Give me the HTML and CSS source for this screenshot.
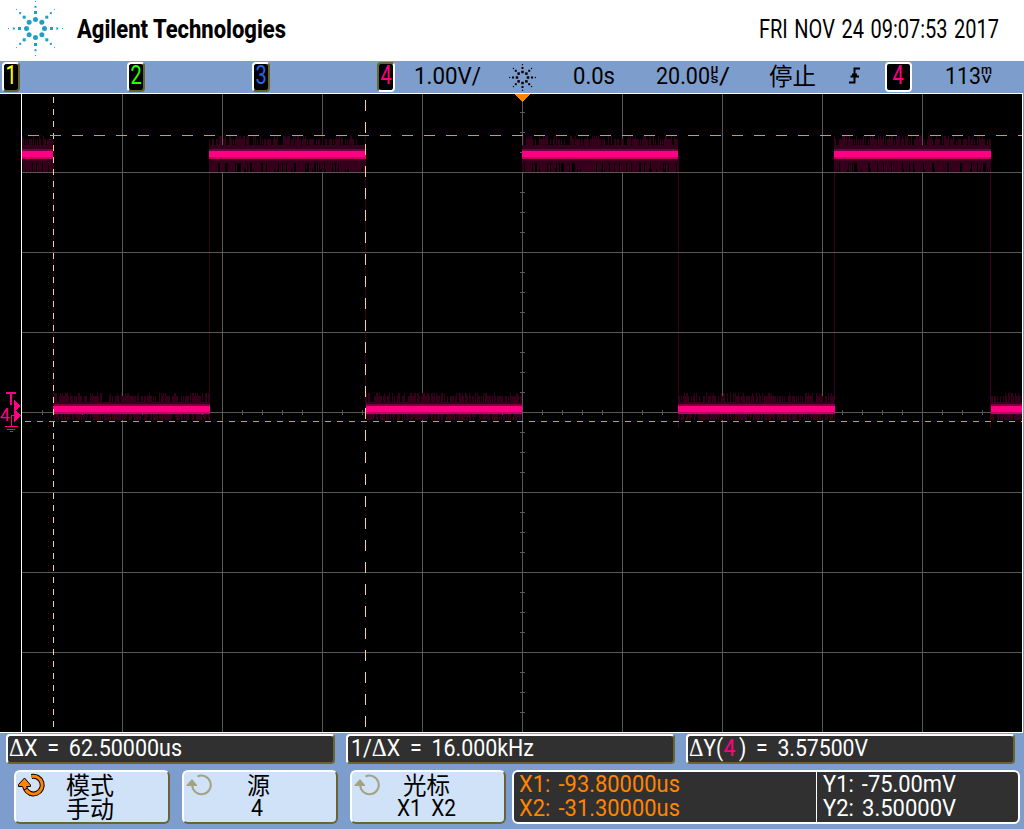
FILE: index.html
```
<!DOCTYPE html>
<html lang="zh">
<head>
  <meta charset="UTF-8">
  <title>Agilent Technologies</title>
  <link rel="stylesheet" href="styles.css">
</head>
<body>
  <div class="scope">
    <header class="header">
      <svg class="logo" id="logo" width="70" height="61"></svg>
      <svg class="brand" width="212" height="61"><text y="38" textLength="209" lengthAdjust="spacingAndGlyphs">Agilent Technologies</text></svg>
      <svg class="date" width="242" height="61"><text y="38" textLength="240" lengthAdjust="spacingAndGlyphs">FRI NOV 24 09:07:53 2017</text></svg>
    </header>

    <div class="status">
      <span class="badge ch1"><b>1</b></span>
      <span class="badge ch2"><b>2</b></span>
      <span class="badge ch3"><b>3</b></span>
      <span class="badge ch4 on"><b>4</b></span>
      <svg class="volts" width="68" height="32"><text y="23" textLength="67" lengthAdjust="spacingAndGlyphs">1.00V/</text></svg>
      <svg class="sun" id="sun" width="28" height="32"></svg>
      <svg class="delay" width="43" height="32"><text y="23" textLength="42" lengthAdjust="spacingAndGlyphs">0.0s</text></svg>
      <svg class="timebase" width="76" height="32">
        <text y="23" textLength="54" lengthAdjust="spacingAndGlyphs">20.00</text>
        <text class="unit" x="54.5" y="12" textLength="8" lengthAdjust="spacingAndGlyphs">µ</text>
        <text class="unit" x="54.5" y="22" textLength="8" lengthAdjust="spacingAndGlyphs">s</text>
        <text x="63" y="23" textLength="11" lengthAdjust="spacingAndGlyphs">/</text>
      </svg>
      <svg class="stop" width="48" height="32"><text y="24" textLength="47" lengthAdjust="spacingAndGlyphs">停止</text></svg>
      <svg class="edge" width="12" height="32"><path d="M0 21.5H5.5V7.5H11M1.5 15.5H10M3 13.5H8"/></svg>
      <span class="badge trig ch4"><b>4</b></span>
      <svg class="level" width="50" height="32">
        <text y="23" textLength="36" lengthAdjust="spacingAndGlyphs">113</text>
        <text class="unit" x="36" y="13" textLength="11" lengthAdjust="spacingAndGlyphs">m</text>
        <text class="unit cap" x="37" y="22" textLength="9" lengthAdjust="spacingAndGlyphs">V</text>
      </svg>
    </div>

    <svg class="screen" width="1024" height="640" viewBox="0 93 1024 640" shape-rendering="crispEdges">
      <rect class="black" x="0" y="93" width="1023" height="640"/>
      <path class="noise" id="edges"/>
      <path class="grid" id="grid"/>
      <path class="noise" id="noise"/>
      <g id="trace"></g>
      <path class="curX" d="M53.5 97V732" stroke-dasharray="6 6"/>
      <path class="curX" d="M365.5 100V732" stroke-dasharray="11 11"/>
      <path class="curY" d="M28 135.5H1022" stroke-dasharray="11 11"/>
      <path class="curY" d="M25 421.5H1022" stroke-dasharray="6 6"/>
      <path class="frame" d="M0 93.5H1023M0 732.5H1023M21.5 93V732M1022.5 93V733"/>
      <path class="orange" d="M515 94H530L522.5 102Z"/>
      <g class="marker">
        <path d="M14 400L21 406L14 412ZM14 409L21 415L14 422Z"/>
        <path class="line" d="M6 393H16M11 393V405M14 415.5H11.5V426M5 426.5H18M7 429.5H15M10 431.5H13"/>
        <text x="0" y="421" textLength="10" lengthAdjust="spacingAndGlyphs">4</text>
      </g>
    </svg>

    <div class="measures">
      <div class="measure"><svg width="176" height="26"><text y="19" textLength="173" lengthAdjust="spacingAndGlyphs"><tspan class="delta">Δ</tspan>X = 62.50000us</text></svg></div>
      <div class="measure"><svg width="190" height="26"><text x="2" y="19" textLength="183" lengthAdjust="spacingAndGlyphs">1/<tspan class="delta">Δ</tspan>X = 16.000kHz</text></svg></div>
      <div class="measure"><svg width="190" height="26">
        <text y="19" textLength="34" lengthAdjust="spacingAndGlyphs"><tspan class="delta">Δ</tspan>Y(</text>
        <text class="pink" x="34.5" y="19" textLength="12" lengthAdjust="spacingAndGlyphs">4</text>
        <text x="50" y="19" textLength="129" lengthAdjust="spacingAndGlyphs">) = 3.57500V</text>
      </svg></div>
    </div>

    <div class="softkeys">
      <div class="key">
        <svg class="knob active" width="30" height="26"><path class="arc" d="M15.5 4.5A8.8 8.8 0 1 1 9.5 17"/><path class="arc in" d="M15.5 4.5A8.8 8.8 0 1 1 9.5 17"/><path class="tip" d="M8.5 6L2.5 12.5V14.5H6.5L8 18L11.5 16L10.5 14.5H14.5V13Z"/></svg>
        <svg class="caption" width="52" height="50"><text y="22" textLength="48" lengthAdjust="spacingAndGlyphs">模式</text><text y="46" textLength="48" lengthAdjust="spacingAndGlyphs">手动</text></svg>
      </div>
      <div class="key">
        <svg class="knob" width="30" height="26"><path class="arc" d="M13.5 4.5A9.3 9.3 0 1 1 8.2 13.5"/><path class="tip" d="M8 7L2.5 13V14H13V13Z"/></svg>
        <svg class="caption" width="24" height="50"><text y="22" textLength="23" lengthAdjust="spacingAndGlyphs">源</text><text x="4" y="44" textLength="12" lengthAdjust="spacingAndGlyphs">4</text></svg>
      </div>
      <div class="key">
        <svg class="knob" width="30" height="26"><path class="arc" d="M13.5 4.5A9.3 9.3 0 1 1 8.2 13.5"/><path class="tip" d="M8 7L2.5 13V14H13V13Z"/></svg>
        <svg class="caption wide" width="62" height="50"><text x="6" y="22" textLength="47" lengthAdjust="spacingAndGlyphs">光标</text><text y="44" textLength="59" lengthAdjust="spacingAndGlyphs">X1 X2</text></svg>
      </div>
      <div class="cursors">
        <svg class="xs" width="302" height="50"><text x="5" y="20" textLength="161" lengthAdjust="spacingAndGlyphs">X1: -93.80000us</text><text x="5" y="44" textLength="161" lengthAdjust="spacingAndGlyphs">X2: -31.30000us</text></svg>
        <svg class="ys" width="150" height="50"><text x="6" y="20" textLength="133" lengthAdjust="spacingAndGlyphs">Y1: -75.00mV</text><text x="6" y="44" textLength="133" lengthAdjust="spacingAndGlyphs">Y2: 3.50000V</text></svg>
      </div>
    </div>
  </div>
  <script src="scope.js"></script>
</body>
</html>
```
FILE: styles.css
```
body {
  margin: 0;
  background: #7d9dcd;
  font-family: Roboto, "Noto Sans CJK SC", sans-serif;
  font-size: 24px;
}

svg {
  display: block;
  flex: none;
  overflow: visible;
}

.scope {
  width: 1024px;
  height: 829px;
  overflow: hidden;
}

/* top */
.header {
  display: flex;
  height: 61px;
  background: #fff;
}

.logo {
  fill: #1f9fc4;
}

.brand {
  margin-left: 7px;
  font-size: 25px;
  font-weight: 800;
}

.date {
  margin-left: 470px;
  font-size: 25px;
  word-spacing: 2px;
}

.status {
  display: flex;
  height: 32px;
  font-size: 24px;
}

.badge {
  box-sizing: border-box;
  flex: none;
  width: 18px;
  height: 30px;
  margin-top: 1px;
  border: 2px solid;
  border-color: #fff #6b6330 #6b6330 #fff;
  border-radius: 4px;
  background: #000;
  font-size: 25px;
  line-height: 24px;
  display: flex;
  justify-content: center;
}

.badge b {
  font-weight: normal;
  transform: scaleX(.8);
}

.ch1 { color: #ff0; margin-left: 2px; }
.ch2 { color: #3f0; margin-left: 107px; }
.ch3 { color: #2266ee; margin-left: 107px; }
.ch4 { color: #ff0084; margin-left: 107px; }

.on {
  border-color: #6b6330 #fff #fff #6b6330;
}

.volts { margin-left: 19px; }
.sun { margin-left: 27px; }
.delay { margin-left: 36px; }
.timebase { margin-left: 40px; }
.stop { margin-left: 37px; }

.edge {
  margin-left: 32px;
  fill: none;
  stroke: #000;
  stroke-width: 2;
}

.trig {
  width: 27px;
  margin-left: 24px;
  border-color: #fff;
}

.level { margin-left: 33px; }

.unit {
  font-size: 12px;
  font-weight: 500;
}

.unit.cap { font-size: 10px; }

/* graticule */
.grid, .curX, .curY, .frame { fill: none; stroke-width: 1; }
.grid { stroke: #585858; }
.frame { stroke: #fff; }
.curX { stroke: #ffd08c; }
.curY { stroke: #ff9010; }
.noise { fill: none; stroke: #36001c; }
.orange { fill: #ff8400; }
.marker { fill: #ff0084; font-size: 18px; }
.marker .line { fill: none; stroke: #ff0084; stroke-width: 1.5; }
.core { fill: #ff0084; }
.mid { fill: #78003e; }
.low { fill: #c00064; }

/* bottom */
.measures {
  display: flex;
  gap: 11px;
  padding: 1px 0 0 6px;
}

.measure {
  box-sizing: border-box;
  width: 329px;
  height: 30px;
  padding: 1px 0 0 1px;
  border: 2px solid;
  border-color: #fff #6b6330 #6b6330 #fff;
  border-radius: 4px;
  background: #303030;
  fill: #fff;
  word-spacing: 5px;
}

.delta {
  font-family: "Liberation Serif", serif;
  font-size: 26px;
}

.pink {
  fill: #ff0084;
}

.softkeys {
  display: flex;
  padding: 6px 0 0 14px;
}

.key {
  box-sizing: border-box;
  display: flex;
  width: 156px;
  height: 54px;
  margin-right: 12px;
  border: 2px solid;
  border-color: #fff #6b6330 #6b6330 #fff;
  border-radius: 6px;
  background: #d0e2f8;
  word-spacing: 5px;
}

.caption { margin-left: 20px; }
.key:nth-child(2) .caption { margin-left: 33px; }
.caption.wide { margin-left: 15px; }

.knob { stroke: #a3a383; }
.knob .arc { fill: none; stroke-width: 2; }
.knob .tip { fill: #a3a383; stroke: none; }
.knob.active .arc { stroke: #000; stroke-width: 5; }
.knob.active .arc.in { stroke: #ff8400; stroke-width: 3; }
.knob.active .tip { fill: #ff8400; stroke: #000; }

.cursors {
  box-sizing: border-box;
  display: flex;
  width: 508px;
  height: 54px;
  margin-left: -6px;
  border: 2px solid #fff;
  border-radius: 6px;
  background: #303030;
  font-size: 24.5px;
  word-spacing: 3px;
}

.xs { fill: #ff8400; }
.ys { fill: #fff; border-left: 1px solid #fff; }
```
FILE: scope.js
```
const NS = "http://www.w3.org/2000/svg";

function add(parent, tag, attrs) {
  const el = document.createElementNS(NS, tag);
  for (const k in attrs) el.setAttribute(k, attrs[k]);
  parent.appendChild(el);
}

// eight rays of dots, rings = [distance, size]
function spark(id, cx, cy, rings) {
  const svg = document.getElementById(id);
  for (let i = 0; i < 8; i++) {
    const a = i * Math.PI / 4;
    rings.forEach(([r, size]) => {
      const x = cx + r * Math.cos(a), y = cy + r * Math.sin(a);
      if (size > 4) add(svg, "circle", { cx: x, cy: y, r: size / 2 });
      else add(svg, "rect", { x: x - size / 2, y: y - size / 2, width: size, height: size });
    });
  }
}
spark("logo", 35.5, 28.5, [[9, 5], [16, 3], [21.7, 2], [27, 1]]);
spark("sun", 13.5, 16.5, [[5.5, 2.5], [9.5, 2], [12.8, 1.2]]);

// grid and centre ticks
let d = "";
for (let x = 122; x < 1000; x += 100) d += `M${x + .5} 94V732`;
for (let y = 172; y < 700; y += 80) d += `M22 ${y + .5}H1022`;
for (let x = 42; x < 1020; x += 20) d += `M${x + .5} 410V415`;
for (let y = 112; y < 730; y += 20) d += `M520 ${y + .5}H525`;
document.getElementById("grid").setAttribute("d", d);

// square wave
let seed = 7;
function rnd() {
  seed = (seed * 16807) % 2147483647;
  return seed / 2147483647;
}
const high = [[22, 53], [209, 366], [522, 678], [834, 991]];
const low = [[53, 210], [366, 522], [678, 835], [991, 1022]];
const trace = document.getElementById("trace");
let n = "";

function band(a, b, y, up, down) {
  for (let x = a; x < b; x++) {
    const t = rnd(), u = rnd();
    const top = t < .25 ? up : t < .7 ? up + 3 : up + 9;
    const bottom = u < .7 ? down : u < .8 ? down - 3 : down - 9;
    n += `M${x + .5} ${top}V${bottom}`;
  }
  add(trace, "rect", { class: "mid", x: a, y: y - 2, width: b - a, height: 2 });
  add(trace, "rect", { class: "core", x: a, y: y, width: b - a, height: 6 });
  add(trace, "rect", { class: "low", x: a, y: y + 6, width: b - a, height: 2 });
}
high.forEach(([a, b]) => band(a, b, 151, 136, 172));
low.forEach(([a, b]) => band(a, b, 406, 393, 420));
document.getElementById("noise").setAttribute("d", n);

// transitions
let e = "";
[53, 209, 365, 522, 678, 834, 990].forEach((x, i) => e += `M${x + .5} 155V${i > 3 && i % 2 == 0 ? 428 : 410}`);
document.getElementById("edges").setAttribute("d", e);
```
